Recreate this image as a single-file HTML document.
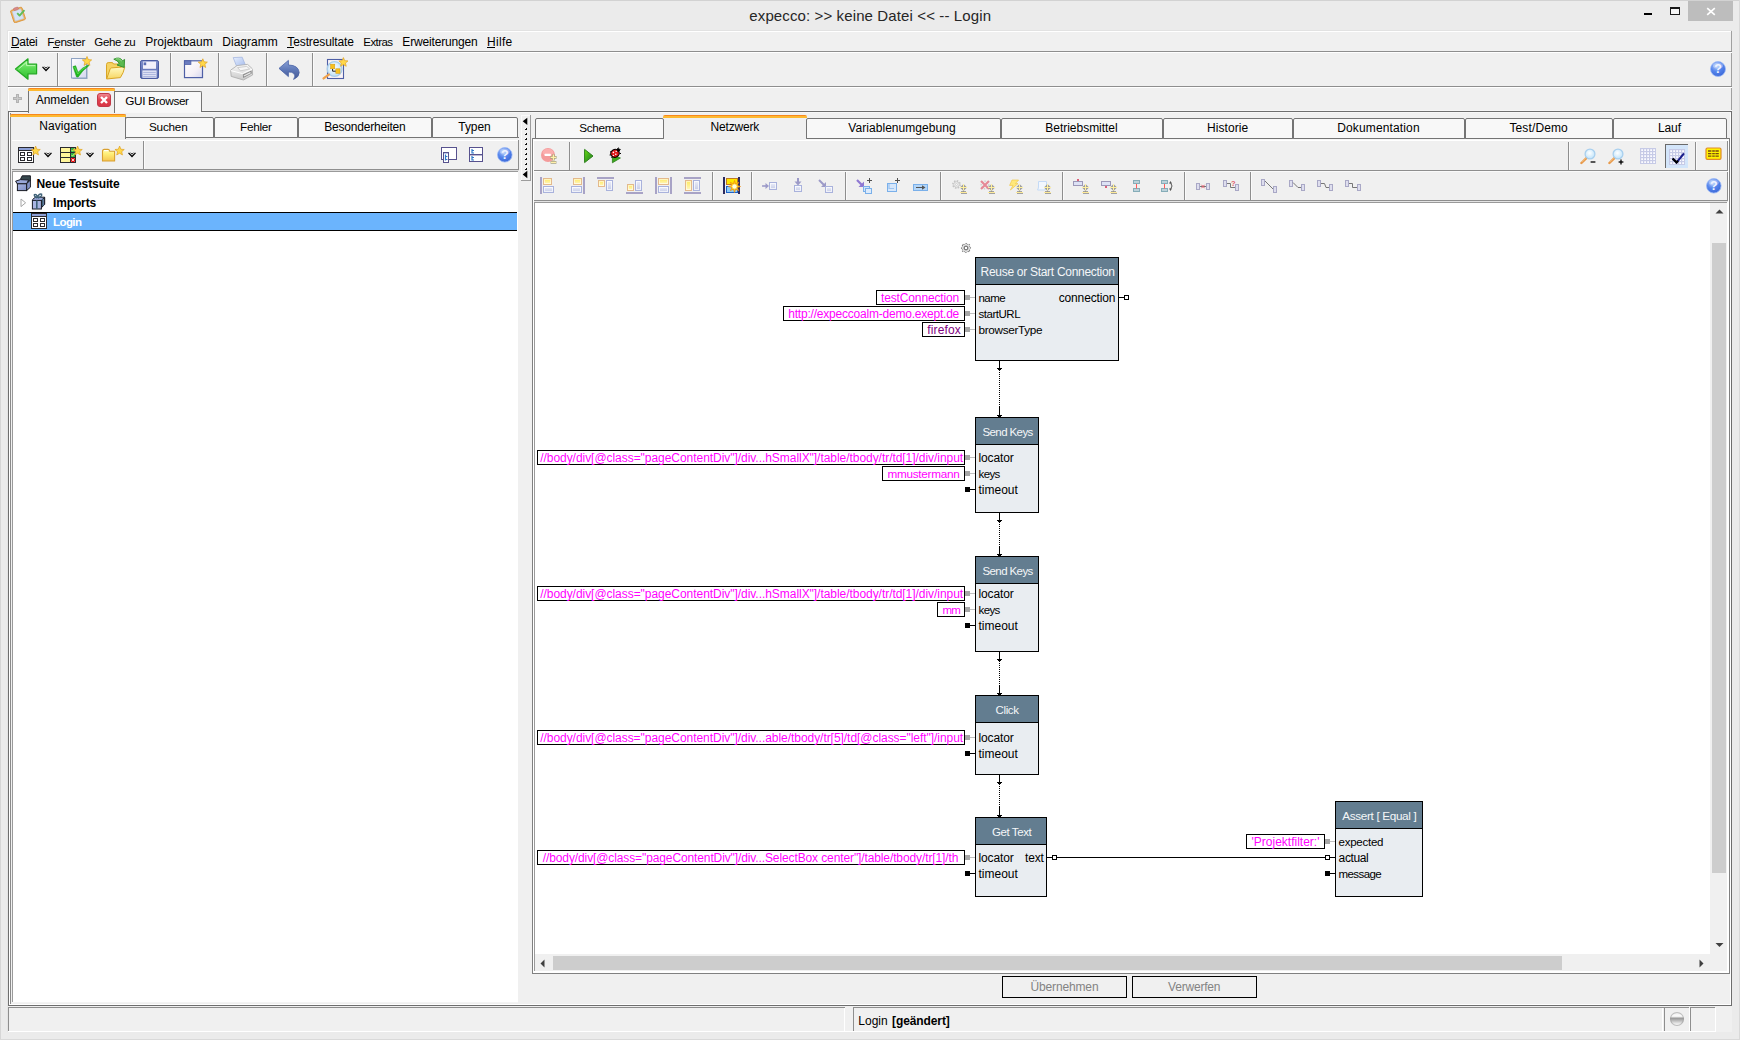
<!DOCTYPE html>
<html lang="de"><head><meta charset="utf-8"><title>expecco: &gt;&gt; keine Datei &lt;&lt; -- Login</title>
<style>
html,body{margin:0;padding:0}
body{width:1740px;height:1040px;overflow:hidden;background:#ebebeb;position:relative;font-family:"Liberation Sans", sans-serif;font-size:12px}
body>div,body>span,body>svg{position:absolute;display:block}
body>span{white-space:pre}
</style></head>
<body>
<div style="left:0px;top:0px;width:1740px;height:1px;background:#d2d2d2;"></div>
<div style="left:0px;top:0px;width:1px;height:1040px;background:#d6d6d6;"></div>
<div style="left:0px;top:1039px;width:1740px;height:1px;background:#d9d9d9;"></div>
<div style="left:1739px;top:0px;width:1px;height:1040px;background:#d9d9d9;"></div>
<div style="left:8px;top:31px;width:1724px;height:1001px;background:#f0f0f0;"></div>
<div style="left:8px;top:31px;width:1724px;height:1px;background:#ffffff;"></div>
<div style="left:8px;top:31px;width:1px;height:80px;background:#ffffff;"></div>
<div style="left:8px;top:30px;width:1724px;height:1px;background:#e2e2e2;"></div>
<div style="left:7px;top:30px;width:1px;height:1002px;background:#e4e4e4;"></div>
<div style="left:1731px;top:31px;width:1px;height:81px;background:#a0a0a0;"></div>
<span style="left:749.3px;top:6px;font-size:15px;line-height:19px;color:#262626;letter-spacing:0.119px;">expecco: &gt;&gt; keine Datei &lt;&lt; -- Login</span>
<div style="left:1644px;top:13px;width:8px;height:2px;background:#000;"></div>
<div style="left:1670px;top:7px;width:10px;height:8px;background:#f6f6f6;border:1px solid #1a1a1a;border-top:2px solid #1a1a1a;box-sizing:border-box;"></div>
<div style="left:1688px;top:1px;width:45px;height:20px;background:#bdbdbd;"></div>
<svg style="left:1706px;top:7px;" width="10" height="9" viewBox="0 0 10 9"><path d="M1.2 1.2 L8.8 7.8 M8.8 1.2 L1.2 7.8" stroke="#fff" stroke-width="1.7" fill="none"/></svg>
<span style="left:11px;top:34px;font-size:12px;line-height:16px;color:#000;letter-spacing:-0.329px;">Datei</span>
<span style="left:47.3px;top:34px;font-size:11.75px;line-height:16px;color:#000;letter-spacing:-0.307px;">Fenster</span>
<span style="left:94.3px;top:34px;font-size:11.5px;line-height:16px;color:#000;letter-spacing:-0.347px;">Gehe zu</span>
<span style="left:145.3px;top:34px;font-size:12px;line-height:16px;color:#000;">Projektbaum</span>
<span style="left:222.3px;top:34px;font-size:12px;line-height:16px;color:#000;">Diagramm</span>
<span style="left:287.3px;top:34px;font-size:12px;line-height:16px;color:#000;letter-spacing:-0.112px;">Testresultate</span>
<span style="left:363.3px;top:34px;font-size:11.5px;line-height:16px;color:#000;letter-spacing:-0.579px;">Extras</span>
<span style="left:402.3px;top:34px;font-size:12px;line-height:16px;color:#000;letter-spacing:-0.166px;">Erweiterungen</span>
<span style="left:487px;top:34px;font-size:12px;line-height:16px;color:#000;letter-spacing:0.321px;">Hilfe</span>
<div style="left:11px;top:47px;width:8px;height:1px;background:#000;"></div>
<div style="left:53px;top:47px;width:6px;height:1px;background:#000;"></div>
<div style="left:287px;top:47px;width:7px;height:1px;background:#000;"></div>
<div style="left:487px;top:47px;width:8px;height:1px;background:#000;"></div>
<div style="left:8px;top:51px;width:1724px;height:1px;background:#8e8e8e;"></div>
<div style="left:8px;top:52px;width:1724px;height:1px;background:#ffffff;"></div>
<div style="left:57px;top:53px;width:1px;height:33px;background:#8e8e8e;"></div>
<div style="left:58px;top:53px;width:1px;height:33px;background:#fafafa;"></div>
<div style="left:170px;top:53px;width:1px;height:33px;background:#8e8e8e;"></div>
<div style="left:171px;top:53px;width:1px;height:33px;background:#fafafa;"></div>
<div style="left:218px;top:53px;width:1px;height:33px;background:#8e8e8e;"></div>
<div style="left:219px;top:53px;width:1px;height:33px;background:#fafafa;"></div>
<div style="left:266px;top:53px;width:1px;height:33px;background:#8e8e8e;"></div>
<div style="left:267px;top:53px;width:1px;height:33px;background:#fafafa;"></div>
<div style="left:312px;top:53px;width:1px;height:33px;background:#8e8e8e;"></div>
<div style="left:313px;top:53px;width:1px;height:33px;background:#fafafa;"></div>
<div style="left:8px;top:86px;width:1724px;height:1px;background:#8e8e8e;"></div>
<div style="left:8px;top:87px;width:1724px;height:1px;background:#ffffff;"></div>
<svg style="left:9px;top:6px;" width="18" height="17" viewBox="0 0 18 17"><g transform="rotate(-18 9 9)"><rect x="3" y="2.5" width="12" height="13" rx="1.2" fill="#f0b35c" stroke="#d8923a" stroke-width=".8"/><rect x="4.6" y="4" width="8.8" height="10" fill="#d5e3f6" stroke="#b9cbe6" stroke-width=".5"/><rect x="6.5" y="1.2" width="5" height="2.6" rx="1" fill="#d98a86" stroke="#b96b68" stroke-width=".4"/></g><path d="M8.2 7.2 L10.6 9.6 L15.4 4.2" stroke="#62bd58" stroke-width="1.9" fill="none" stroke-linejoin="round"/></svg>
<svg style="left:14px;top:57px;" width="24" height="24" viewBox="0 0 24 24"><defs><linearGradient id="ga" x1="0" y1="0" x2="0" y2="1"><stop offset="0" stop-color="#a4f296"/><stop offset=".45" stop-color="#5bdc55"/><stop offset="1" stop-color="#2fbe2e"/></linearGradient></defs><path d="M1.5 12 L14 1.8 L14 7.2 L22.6 7.2 L22.6 16.8 L14 16.8 L14 22.2 Z" fill="url(#ga)" stroke="#22a822" stroke-width="1.2" stroke-linejoin="round"/><path d="M4.5 12 L12.6 5.2 L12.6 8.6 L21.2 8.6" stroke="#c6ffbd" stroke-width="1" fill="none" opacity=".8"/></svg>
<svg style="left:42px;top:66px;" width="8" height="6" viewBox="0 0 8 6"><path d="M0.5 0.9 L4 4.5 L7.5 0.9" stroke="#000" stroke-width="1.25" fill="none"/><path d="M2.5 0.7 L4 2.2 L5.5 0.7" stroke="#000" stroke-width=".9" fill="none"/></svg>
<svg style="left:70px;top:56px;" width="23" height="25" viewBox="0 0 23 25"><defs><linearGradient id="gd" x1="0" y1="0" x2="1" y2="1"><stop offset="0" stop-color="#fdfdff"/><stop offset="1" stop-color="#d6d9ee"/></linearGradient></defs><rect x="2.5" y="3.5" width="15" height="19.5" fill="#6f8cab" opacity=".7"/><rect x="1.5" y="2.5" width="15" height="19.5" fill="url(#gd)" stroke="#8fa3c2" stroke-width="1"/><path d="M3 10.6 L5.6 9.8 L8 16.4 Q12 11.6 18.4 9 L18.8 9.8 Q12.2 14.4 8.2 21 L6.6 21 Z" fill="#1fb41f" stroke="#17a017" stroke-width=".6" stroke-linejoin="round"/><path d="M4.6 11 L7.8 18 Q11 13.6 16 10.8" stroke="#58de50" stroke-width=".9" fill="none"/><polygon points="17.00,0.50 18.30,3.62 21.66,3.89 19.10,6.08 19.88,9.36 17.00,7.61 14.12,9.36 14.90,6.08 12.34,3.89 15.70,3.62" fill="#ffd84a" stroke="#e0a020" stroke-width="0.7" stroke-linejoin="round"/></svg>
<svg style="left:105px;top:56px;" width="23" height="25" viewBox="0 0 23 25"><defs><linearGradient id="gf" x1="0" y1="0" x2="0" y2="1"><stop offset="0" stop-color="#fffbc4"/><stop offset="1" stop-color="#f7d661"/></linearGradient></defs><path d="M1.5 22.5 V8.4 Q1.6 6.8 3.2 6.6 H7 Q8.2 6.8 8.6 8 H14.4 Q15.6 8.2 15.6 9.4 V12 Z" fill="#f5d363" stroke="#d9a526" stroke-width="1" stroke-linejoin="round"/><path d="M1.6 23 L5.2 12.8 Q5.6 12 6.6 11.9 L19.8 10.8 Q18.6 17 15.4 21.6 Z" fill="url(#gf)" stroke="#d9a526" stroke-width="1" stroke-linejoin="round"/><path d="M8.8 3.2 Q14.6 0.2 17.6 4.8 L19.6 3.4 L19.2 11.4 L12 9 L14.4 7.4 Q12.6 4.4 8.8 3.2 Z" fill="#5cba50" stroke="#2f8f2b" stroke-width=".9" stroke-linejoin="round"/><path d="M10.6 3 Q14.4 1.6 16.8 5" stroke="#a6e49c" stroke-width=".8" fill="none"/></svg>
<svg style="left:139px;top:59px;" width="21" height="21" viewBox="0 0 21 21"><defs><linearGradient id="gs" x1="0" y1="0" x2="0" y2="1"><stop offset="0" stop-color="#7f8fcb"/><stop offset="1" stop-color="#5467ae"/></linearGradient></defs><rect x="1.5" y="1.5" width="18" height="18" rx="1.6" fill="url(#gs)" stroke="#4b5ca2" stroke-width="1"/><rect x="4" y="2.6" width="13" height="7.2" fill="#f2f1fb"/><rect x="4.6" y="3.4" width="2.6" height="2.8" fill="#5a6cb2"/><rect x="3.4" y="11.4" width="14.2" height="7.4" fill="#e4e6f6"/><path d="M4.2 13.4 H16.8 M4.2 15.4 H16.8 M4.2 17.4 H16.8" stroke="#a9b2dd" stroke-width="1"/></svg>
<svg style="left:183px;top:58px;" width="26" height="22" viewBox="0 0 26 22"><defs><linearGradient id="gw" x1="0" y1="0" x2="1" y2="1"><stop offset="0" stop-color="#ffffff"/><stop offset=".6" stop-color="#f5f0f6"/><stop offset="1" stop-color="#d5d6ee"/></linearGradient></defs><rect x="1.5" y="2.8" width="18" height="16.8" fill="url(#gw)" stroke="#4e5fa6" stroke-width="1.2"/><rect x="1.5" y="2.8" width="6.4" height="3.6" fill="#6b7cc0" stroke="#4e5fa6" stroke-width=".8"/><polygon points="19.80,0.80 21.07,3.85 24.37,4.12 21.85,6.27 22.62,9.48 19.80,7.76 16.98,9.48 17.75,6.27 15.23,4.12 18.53,3.85" fill="#ffd84a" stroke="#e0a020" stroke-width="0.7" stroke-linejoin="round"/></svg>
<svg style="left:229px;top:56px;" width="25" height="26" viewBox="0 0 25 26"><defs><linearGradient id="gp" x1="0" y1="0" x2="0" y2="1"><stop offset="0" stop-color="#fafafa"/><stop offset="1" stop-color="#c9c9c9"/></linearGradient><linearGradient id="gpp" x1="0" y1="0" x2="1" y2="1"><stop offset="0" stop-color="#e8f0ff"/><stop offset="1" stop-color="#9fb7ea"/></linearGradient></defs><path d="M4.2 1.6 L13.2 1.2 L17 10.4 L8 11.4 Z" fill="url(#gpp)" stroke="#9db0dc" stroke-width=".7"/><path d="M1.6 14.2 L8 9.6 L18.6 8.4 L23.4 12.8 L23.6 19 L14.4 24 L2.2 20.4 Z" fill="url(#gp)" stroke="#a9a9a9" stroke-width=".8" stroke-linejoin="round"/><path d="M8.6 11.6 L17.8 10.4 L20.6 13 L11.4 14.8 Z" fill="#f6f6f6" stroke="#b5b5b5" stroke-width=".6"/><path d="M1.8 14.6 L13.6 17.6 L23.4 13" stroke="#fff" stroke-width="1" fill="none"/><path d="M13.8 18.4 L22.6 14.4 L22.8 17.6 L14.2 22 Z" fill="#8c8c8c"/><path d="M14.8 20 L21.6 16.6" stroke="#e8e8e8" stroke-width="1.2"/></svg>
<svg style="left:278px;top:59px;" width="23" height="22" viewBox="0 0 23 22"><defs><linearGradient id="gu" x1="0" y1="0" x2="0" y2="1"><stop offset="0" stop-color="#8aa2d8"/><stop offset=".55" stop-color="#5a74b4"/><stop offset="1" stop-color="#46598f"/></linearGradient></defs><path d="M1 9.4 L10.4 1.4 L10.4 6 Q20.6 6.2 21.2 13.6 Q21.2 18 15.6 20.4 Q18.2 16.6 15.8 14.4 Q13.8 12.8 10.4 13 L10.4 17.6 Z" fill="url(#gu)" stroke="#4560a6" stroke-width=".8" stroke-linejoin="round"/></svg>
<svg style="left:322px;top:57px;" width="28" height="24" viewBox="0 0 28 24"><defs><radialGradient id="gm" cx="45%" cy="40%" r="60%"><stop offset="0" stop-color="#ffffff"/><stop offset="1" stop-color="#bfe0f6"/></radialGradient></defs><rect x="5.5" y="2.5" width="16" height="19" fill="#fbf4f6" stroke="#4e5fa6" stroke-width="1.1"/><circle cx="12.6" cy="12" r="7.4" fill="url(#gm)" stroke="#a9cdea" stroke-width="1.3"/><path d="M6.8 17.6 L1.6 21.4" stroke="#f0a24c" stroke-width="2.4" stroke-linecap="round"/><rect x="8.6" y="7.2" width="4.2" height="4.6" fill="#f7c11e" stroke="#d39a10" stroke-width=".5"/><rect x="13.8" y="11.8" width="4.2" height="4.6" fill="#f7c11e" stroke="#d39a10" stroke-width=".5"/><path d="M10.6 12 V14.2 H13.6" stroke="#222" stroke-width="1" fill="none"/><polygon points="21.40,0.60 22.67,3.65 25.97,3.92 23.45,6.07 24.22,9.28 21.40,7.56 18.58,9.28 19.35,6.07 16.83,3.92 20.13,3.65" fill="#ffd84a" stroke="#e0a020" stroke-width="0.7" stroke-linejoin="round"/></svg>
<svg style="left:1710.0px;top:61.0px;" width="16.0" height="16.0" viewBox="0 0 16.0 16.0"><defs><radialGradient id="h1" cx="40%" cy="30%" r="75%"><stop offset="0" stop-color="#b4ccfb"/><stop offset=".5" stop-color="#5585ec"/><stop offset="1" stop-color="#3a66d6"/></radialGradient></defs><circle cx="8.0" cy="8.0" r="7.5" fill="url(#h1)" stroke="#9bb9f6" stroke-width=".8"/><ellipse cx="8.0" cy="4.625" rx="5.25" ry="3.15" fill="#fff" opacity=".28"/><text x="8.0" y="12.4" text-anchor="middle" font-family="Liberation Sans, sans-serif" font-weight="700" font-size="12.5" fill="#eef3ff">?</text></svg>
<div style="left:8px;top:111px;width:1724px;height:1px;background:#6e6e6e;"></div>
<div style="left:8px;top:112px;width:1724px;height:1px;background:#f7f7f7;"></div>
<div style="left:8px;top:110px;width:1724px;height:1px;background:#f5f5f5;"></div>
<div style="left:13px;top:97px;width:9px;height:3px;background:#b2b2b2;"></div>
<div style="left:16px;top:94px;width:3px;height:9px;background:#b2b2b2;"></div>
<div style="left:14px;top:98px;width:7px;height:1px;background:#c9c9c9;"></div>
<div style="left:17px;top:95px;width:1px;height:7px;background:#c9c9c9;"></div>
<div style="left:28px;top:88px;width:87px;height:25px;background:#f0f0f0;border-left:1px solid #747474;border-right:1px solid #747474;box-sizing:border-box;border-radius:2px 2px 0 0;"></div>
<div style="left:28px;top:88px;width:87px;height:3px;background:linear-gradient(#f8881e 0 1px,#fdb931 1px 3px);border-radius:2px 2px 0 0;"></div>
<span style="left:35.7px;top:92px;font-size:12px;line-height:16px;color:#000;letter-spacing:-0.064px;">Anmelden</span>
<svg style="left:97px;top:93px;" width="14" height="14" viewBox="0 0 14 14"><defs><linearGradient id="gcl" x1="0" y1="0" x2="0" y2="1"><stop offset="0" stop-color="#ef8d95"/><stop offset=".5" stop-color="#e0414e"/><stop offset="1" stop-color="#d83545"/></linearGradient></defs><rect x="0.5" y="0.5" width="13" height="13" rx="2.5" fill="url(#gcl)" stroke="#c23a48"/><path d="M4 4 L10 10 M10 4 L4 10" stroke="#fff" stroke-width="2.4"/></svg>
<div style="left:115px;top:91px;width:87px;height:21px;background:#f8f8f8;border:1px solid #747474;border-left:none;border-bottom:none;box-sizing:border-box;border-radius:0 2px 0 0;"></div>
<span style="left:125.3px;top:93px;font-size:11.75px;line-height:16px;color:#000;letter-spacing:-0.355px;">GUI Browser</span>
<div style="left:8px;top:112px;width:1px;height:894px;background:#6e6e6e;"></div>
<div style="left:9px;top:113px;width:1px;height:892px;background:#ffffff;"></div>
<div style="left:10px;top:113px;width:1px;height:892px;background:#8a8a8a;"></div>
<div style="left:11px;top:137px;width:508px;height:1px;background:#747474;"></div>
<div style="left:125px;top:117px;width:89px;height:21px;background:#f8f8f8;border:1px solid #747474;box-sizing:border-box;border-radius:2px 2px 0 0;"></div>
<span style="left:149px;top:119px;font-size:11.75px;line-height:16px;color:#000;letter-spacing:-0.232px;">Suchen</span>
<div style="left:214px;top:117px;width:84px;height:21px;background:#f8f8f8;border:1px solid #747474;box-sizing:border-box;border-radius:2px 2px 0 0;"></div>
<span style="left:240px;top:119px;font-size:11.75px;line-height:16px;color:#000;letter-spacing:-0.263px;">Fehler</span>
<div style="left:298px;top:117px;width:134px;height:21px;background:#f8f8f8;border:1px solid #747474;box-sizing:border-box;border-radius:2px 2px 0 0;"></div>
<span style="left:324.3px;top:119px;font-size:12px;line-height:16px;color:#000;letter-spacing:-0.206px;">Besonderheiten</span>
<div style="left:432px;top:117px;width:86px;height:21px;background:#f8f8f8;border:1px solid #747474;box-sizing:border-box;border-radius:2px 2px 0 0;"></div>
<span style="left:458.3px;top:119px;font-size:12px;line-height:16px;color:#000;letter-spacing:-0.076px;">Typen</span>
<div style="left:12px;top:140px;width:507px;height:1px;background:#ffffff;"></div>
<div style="left:10px;top:114px;width:116px;height:25px;background:#f0f0f0;border-right:1px solid #747474;border-left:1px solid #8a8a8a;box-sizing:border-box;border-radius:2px 2px 0 0;"></div>
<div style="left:10px;top:114px;width:116px;height:3px;background:linear-gradient(#f8881e 0 1px,#fdb931 1px 3px);border-radius:2px 2px 0 0;"></div>
<span style="left:39.3px;top:118px;font-size:12px;line-height:16px;color:#000;letter-spacing:0.077px;">Navigation</span>
<div style="left:143px;top:141px;width:1px;height:28px;background:#8e8e8e;"></div>
<div style="left:144px;top:141px;width:1px;height:28px;background:#fafafa;"></div>
<div style="left:12px;top:169px;width:507px;height:1px;background:#8e8e8e;"></div>
<div style="left:12px;top:170px;width:507px;height:1px;background:#dcdcdc;"></div>
<div style="left:518px;top:140px;width:1px;height:30px;background:#8e8e8e;"></div>
<div style="left:12px;top:171px;width:1px;height:832px;background:#9a9a9a;"></div>
<div style="left:13px;top:172px;width:505px;height:830px;background:#ffffff;"></div>
<div style="left:12px;top:171px;width:506px;height:1px;background:#9a9a9a;"></div>
<div style="left:8px;top:1005px;width:1724px;height:1px;background:#6e6e6e;"></div>
<div style="left:9px;top:1004px;width:1722px;height:1px;background:#ffffff;"></div>
<div style="left:12px;top:1002px;width:506px;height:1px;background:#f4f4f4;"></div>
<div style="left:13px;top:212px;width:504px;height:19px;background:#6bb4fd;border-top:1px solid #000;border-bottom:1px solid #000;box-sizing:border-box;"></div>
<span style="left:36.5px;top:176px;font-size:12px;line-height:16px;color:#000;letter-spacing:-0.098px;font-weight:700;">Neue Testsuite</span>
<span style="left:53px;top:195px;font-size:12px;line-height:16px;color:#000;letter-spacing:-0.136px;font-weight:700;">Imports</span>
<span style="left:53px;top:214px;font-size:11.5px;line-height:16px;color:#fff;letter-spacing:-0.574px;font-weight:700;">Login</span>
<div style="left:521px;top:115px;width:1px;height:66px;background:#fbfbfb;"></div>
<div style="left:521px;top:115px;width:10px;height:1px;background:#fbfbfb;"></div>
<div style="left:521px;top:180px;width:10px;height:1px;background:#9c9c9c;"></div>
<div style="left:530px;top:115px;width:1px;height:66px;background:#9c9c9c;"></div>
<svg style="left:521px;top:115px;" width="10" height="66" viewBox="0 0 10 66"><path d="M6.3 2.7 L1.7 6.3 L6.3 9.9 Z M6.3 55.7 L1.7 59.5 L6.3 63.3 Z" fill="#000"/><rect x="4" y="13" width="2" height="2" fill="#111"/><rect x="4" y="13" width="1" height="1" fill="#fff"/><rect x="4" y="18" width="2" height="2" fill="#111"/><rect x="4" y="18" width="1" height="1" fill="#fff"/><rect x="4" y="23" width="2" height="2" fill="#111"/><rect x="4" y="23" width="1" height="1" fill="#fff"/><rect x="4" y="28" width="2" height="2" fill="#111"/><rect x="4" y="28" width="1" height="1" fill="#fff"/><rect x="4" y="33" width="2" height="2" fill="#111"/><rect x="4" y="33" width="1" height="1" fill="#fff"/><rect x="4" y="38" width="2" height="2" fill="#111"/><rect x="4" y="38" width="1" height="1" fill="#fff"/><rect x="4" y="43" width="2" height="2" fill="#111"/><rect x="4" y="43" width="1" height="1" fill="#fff"/><rect x="4" y="48" width="2" height="2" fill="#111"/><rect x="4" y="48" width="1" height="1" fill="#fff"/><rect x="4" y="53" width="2" height="2" fill="#111"/><rect x="4" y="53" width="1" height="1" fill="#fff"/></svg>
<div style="left:532px;top:138px;width:1198px;height:1px;background:#747474;"></div>
<div style="left:535px;top:118px;width:129px;height:21px;background:#f8f8f8;border:1px solid #747474;box-sizing:border-box;border-radius:2px 2px 0 0;"></div>
<span style="left:579.3px;top:120px;font-size:11.75px;line-height:16px;color:#000;letter-spacing:-0.342px;">Schema</span>
<div style="left:806px;top:118px;width:195px;height:21px;background:#f8f8f8;border:1px solid #747474;box-sizing:border-box;border-radius:2px 2px 0 0;"></div>
<span style="left:848.3px;top:120px;font-size:12px;line-height:16px;color:#000;letter-spacing:0.054px;">Variablenumgebung</span>
<div style="left:1001px;top:118px;width:162px;height:21px;background:#f8f8f8;border:1px solid #747474;box-sizing:border-box;border-radius:2px 2px 0 0;"></div>
<span style="left:1045.3px;top:120px;font-size:12px;line-height:16px;color:#000;letter-spacing:-0.023px;">Betriebsmittel</span>
<div style="left:1163px;top:118px;width:130px;height:21px;background:#f8f8f8;border:1px solid #747474;box-sizing:border-box;border-radius:2px 2px 0 0;"></div>
<span style="left:1207px;top:120px;font-size:12px;line-height:16px;color:#000;letter-spacing:0.073px;">Historie</span>
<div style="left:1293px;top:118px;width:172px;height:21px;background:#f8f8f8;border:1px solid #747474;box-sizing:border-box;border-radius:2px 2px 0 0;"></div>
<span style="left:1337.2px;top:120px;font-size:12px;line-height:16px;color:#000;letter-spacing:0.140px;">Dokumentation</span>
<div style="left:1465px;top:118px;width:148px;height:21px;background:#f8f8f8;border:1px solid #747474;box-sizing:border-box;border-radius:2px 2px 0 0;"></div>
<span style="left:1509.4px;top:120px;font-size:12px;line-height:16px;color:#000;letter-spacing:0.130px;">Test/Demo</span>
<div style="left:1613px;top:118px;width:114px;height:21px;background:#f8f8f8;border:1px solid #747474;box-sizing:border-box;border-radius:2px 2px 0 0;"></div>
<span style="left:1658px;top:120px;font-size:12px;line-height:16px;color:#000;letter-spacing:-0.120px;">Lauf</span>
<div style="left:534px;top:139px;width:1194px;height:1px;background:#f6f6f6;"></div>
<div style="left:534px;top:140px;width:1194px;height:1px;background:#ffffff;"></div>
<div style="left:1727px;top:141px;width:1px;height:61px;background:#8e8e8e;"></div>
<div style="left:532px;top:138px;width:1px;height:836px;background:#808080;"></div>
<div style="left:533px;top:139px;width:1px;height:834px;background:#ffffff;"></div>
<div style="left:1729px;top:138px;width:1px;height:836px;background:#808080;"></div>
<div style="left:1728px;top:139px;width:1px;height:834px;background:#ffffff;"></div>
<div style="left:532px;top:973px;width:1198px;height:1px;background:#808080;"></div>
<div style="left:664px;top:115px;width:142px;height:25px;background:#f0f0f0;"></div>
<div style="left:663px;top:115px;width:144px;height:3px;background:linear-gradient(#f8881e 0 1px,#fdb931 1px 3px);border-radius:2px 2px 0 0;"></div>
<span style="left:710.5px;top:119px;font-size:12px;line-height:16px;color:#000;letter-spacing:-0.174px;">Netzwerk</span>
<div style="left:534px;top:170px;width:1194px;height:1px;background:#8e8e8e;"></div>
<div style="left:534px;top:171px;width:1194px;height:1px;background:#fafafa;"></div>
<div style="left:569px;top:142px;width:1px;height:28px;background:#8e8e8e;"></div>
<div style="left:570px;top:142px;width:1px;height:28px;background:#fafafa;"></div>
<div style="left:1568px;top:142px;width:1px;height:28px;background:#8e8e8e;"></div>
<div style="left:1569px;top:142px;width:1px;height:28px;background:#fafafa;"></div>
<div style="left:1695px;top:142px;width:1px;height:28px;background:#8e8e8e;"></div>
<div style="left:1696px;top:142px;width:1px;height:28px;background:#fafafa;"></div>
<div style="left:534px;top:200px;width:1194px;height:1px;background:#8e8e8e;"></div>
<div style="left:534px;top:201px;width:1194px;height:1px;background:#e4e4e4;"></div>
<div style="left:712px;top:172px;width:1px;height:28px;background:#8e8e8e;"></div>
<div style="left:713px;top:172px;width:1px;height:28px;background:#fafafa;"></div>
<div style="left:751px;top:172px;width:1px;height:28px;background:#8e8e8e;"></div>
<div style="left:752px;top:172px;width:1px;height:28px;background:#fafafa;"></div>
<div style="left:845px;top:172px;width:1px;height:28px;background:#8e8e8e;"></div>
<div style="left:846px;top:172px;width:1px;height:28px;background:#fafafa;"></div>
<div style="left:940px;top:172px;width:1px;height:28px;background:#8e8e8e;"></div>
<div style="left:941px;top:172px;width:1px;height:28px;background:#fafafa;"></div>
<div style="left:1062px;top:172px;width:1px;height:28px;background:#8e8e8e;"></div>
<div style="left:1063px;top:172px;width:1px;height:28px;background:#fafafa;"></div>
<div style="left:1184px;top:172px;width:1px;height:28px;background:#8e8e8e;"></div>
<div style="left:1185px;top:172px;width:1px;height:28px;background:#fafafa;"></div>
<div style="left:1250px;top:172px;width:1px;height:28px;background:#8e8e8e;"></div>
<div style="left:1251px;top:172px;width:1px;height:28px;background:#fafafa;"></div>
<div style="left:534px;top:202px;width:1px;height:769px;background:#9a9a9a;"></div>
<div style="left:534px;top:202px;width:1193px;height:1px;background:#9a9a9a;"></div>
<div style="left:1727px;top:202px;width:1px;height:771px;background:#ffffff;"></div>
<div style="left:535px;top:203px;width:1175px;height:751px;background:#ffffff;"></div>
<div style="left:1710px;top:203px;width:17px;height:751px;background:#f0f0f0;"></div>
<div style="left:1712px;top:243px;width:14px;height:630px;background:#cdcdcd;"></div>
<svg style="left:1715px;top:208px;" width="9" height="6" viewBox="0 0 9 6"><path d="M0.5 5.5 L4.5 1.5 L8.5 5.5 Z" fill="#404040"/></svg>
<svg style="left:1715px;top:943px;" width="9" height="6" viewBox="0 0 9 6"><path d="M0.5 0 L4.5 4 L8.5 0 Z" fill="#404040"/></svg>
<div style="left:535px;top:954px;width:1192px;height:17px;background:#f0f0f0;"></div>
<div style="left:534px;top:971px;width:1195px;height:1px;background:#ffffff;"></div>
<div style="left:533px;top:972px;width:1196px;height:1px;background:#ffffff;"></div>
<div style="left:553px;top:956px;width:1009px;height:14px;background:#cdcdcd;"></div>
<svg style="left:539.3px;top:958.8px;" width="6" height="9" viewBox="0 0 6 9"><path d="M5.5 0.5 L1.5 4.5 L5.5 8.5 Z" fill="#404040"/></svg>
<svg style="left:1698.9px;top:958.8px;" width="6" height="9" viewBox="0 0 6 9"><path d="M0.5 0.5 L4.5 4.5 L0.5 8.5 Z" fill="#404040"/></svg>
<svg style="left:960px;top:242px;" width="12" height="12" viewBox="0 0 12 12"><polygon points="6.00,1.00 7.49,2.40 9.54,2.46 9.60,4.51 11.00,6.00 9.60,7.49 9.54,9.54 7.49,9.60 6.00,11.00 4.51,9.60 2.46,9.54 2.40,7.49 1.00,6.00 2.40,4.51 2.46,2.46 4.51,2.40" fill="#dedede" stroke="#6a6a6a" stroke-width=".9" stroke-dasharray="1.1 .7" stroke-linejoin="round"/><circle cx="6" cy="6" r="1.9" fill="#fff" stroke="#5a5a5a" stroke-width="1"/></svg>
<div style="left:975px;top:257px;width:144px;height:104px;background:#e9edf1;border:1px solid #000;box-sizing:border-box;"></div>
<div style="left:976px;top:258px;width:142px;height:26px;background:#637d90;"></div>
<div style="left:975px;top:284px;width:144px;height:1px;background:#000;"></div>
<span style="left:980.6px;top:264px;font-size:12px;line-height:16px;color:#f4f6f8;letter-spacing:-0.293px;">Reuse or Start Connection</span>
<div style="left:965px;top:295px;width:5px;height:5px;background:#a6a6a6;"></div>
<div style="left:970px;top:297px;width:5px;height:1px;background:#c0c0c0;"></div>
<span style="left:978.5px;top:290px;font-size:11.5px;line-height:16px;color:#000;letter-spacing:-0.560px;">name</span>
<div style="left:965px;top:311px;width:5px;height:5px;background:#a6a6a6;"></div>
<div style="left:970px;top:313px;width:5px;height:1px;background:#c0c0c0;"></div>
<span style="left:978.5px;top:306px;font-size:11.5px;line-height:16px;color:#000;letter-spacing:-0.468px;">startURL</span>
<div style="left:965px;top:327px;width:5px;height:5px;background:#a6a6a6;"></div>
<div style="left:970px;top:329px;width:5px;height:1px;background:#c0c0c0;"></div>
<span style="left:978.5px;top:322px;font-size:11.75px;line-height:16px;color:#000;letter-spacing:-0.327px;">browserType</span>
<span style="left:1058.75px;top:290px;font-size:12px;line-height:16px;color:#000;letter-spacing:-0.161px;">connection</span>
<div style="left:1119px;top:297px;width:5px;height:1px;background:#000;"></div>
<div style="left:1124px;top:295px;width:5px;height:5px;background:#fff;border:1px solid #000;box-sizing:border-box;"></div>
<div style="left:876px;top:290px;width:89px;height:15px;background:#fff;border:1px solid #000;box-sizing:border-box;"></div>
<span style="left:881px;top:290px;font-size:12px;line-height:16px;color:#ff00ff;letter-spacing:-0.136px;">testConnection</span>
<div style="left:783px;top:306px;width:182px;height:15px;background:#fff;border:1px solid #000;box-sizing:border-box;"></div>
<span style="left:788.3px;top:306px;font-size:12px;line-height:16px;color:#ff00ff;letter-spacing:-0.215px;">http://expeccoalm-demo.exept.de</span>
<div style="left:922px;top:322px;width:43px;height:15px;background:#fff;border:1px solid #000;box-sizing:border-box;"></div>
<span style="left:927.3px;top:322px;font-size:12px;line-height:16px;color:#800080;letter-spacing:0.119px;">firefox</span>
<div style="left:999px;top:361px;width:1px;height:8px;background:#000;"></div>
<div style="left:997px;top:368px;width:5px;height:1px;background:#000;"></div>
<div style="left:998px;top:369px;width:3px;height:1px;background:#000;"></div>
<div style="left:999px;top:370px;width:1px;height:1px;background:#000;"></div>
<div style="left:999px;top:372px;width:1px;height:36px;background:repeating-linear-gradient(#000 0 1px,#fff 1px 2px);"></div>
<div style="left:999px;top:407px;width:1px;height:9px;background:#000;"></div>
<div style="left:997px;top:415px;width:5px;height:1px;background:#000;"></div>
<div style="left:998px;top:416px;width:3px;height:1px;background:#000;"></div>
<div style="left:975px;top:417px;width:64px;height:96px;background:#e9edf1;border:1px solid #000;box-sizing:border-box;"></div>
<div style="left:976px;top:418px;width:62px;height:26px;background:#637d90;"></div>
<div style="left:975px;top:444px;width:64px;height:1px;background:#000;"></div>
<span style="left:982.5px;top:424px;font-size:11.5px;line-height:16px;color:#f4f6f8;letter-spacing:-0.600px;">Send Keys</span>
<div style="left:965px;top:455px;width:5px;height:5px;background:#a6a6a6;"></div>
<div style="left:970px;top:457px;width:5px;height:1px;background:#c0c0c0;"></div>
<span style="left:978.5px;top:450px;font-size:12px;line-height:16px;color:#000;letter-spacing:-0.130px;">locator</span>
<div style="left:965px;top:471px;width:5px;height:5px;background:#a6a6a6;"></div>
<div style="left:970px;top:473px;width:5px;height:1px;background:#c0c0c0;"></div>
<span style="left:978.5px;top:466px;font-size:11.5px;line-height:16px;color:#000;letter-spacing:-0.600px;">keys</span>
<div style="left:965px;top:487px;width:5px;height:5px;background:#000;"></div>
<div style="left:970px;top:489px;width:5px;height:1px;background:#000;"></div>
<span style="left:978.5px;top:482px;font-size:12px;line-height:16px;color:#000;">timeout</span>
<div style="left:537px;top:450px;width:428px;height:15px;background:#fff;border:1px solid #000;box-sizing:border-box;"></div>
<span style="left:540.2px;top:450px;font-size:12px;line-height:16px;color:#ff00ff;letter-spacing:-0.045px;">//body/div[@class=&quot;pageContentDiv&quot;]/div...hSmallX&quot;]/table/tbody/tr/td[1]/div/input</span>
<div style="left:882px;top:466px;width:83px;height:15px;background:#fff;border:1px solid #000;box-sizing:border-box;"></div>
<span style="left:887.5px;top:466px;font-size:11.75px;line-height:16px;color:#ff00ff;letter-spacing:-0.284px;">mmustermann</span>
<div style="left:999px;top:513px;width:1px;height:8px;background:#000;"></div>
<div style="left:997px;top:520px;width:5px;height:1px;background:#000;"></div>
<div style="left:998px;top:521px;width:3px;height:1px;background:#000;"></div>
<div style="left:999px;top:522px;width:1px;height:1px;background:#000;"></div>
<div style="left:999px;top:524px;width:1px;height:23px;background:repeating-linear-gradient(#000 0 1px,#fff 1px 2px);"></div>
<div style="left:999px;top:546px;width:1px;height:9px;background:#000;"></div>
<div style="left:997px;top:554px;width:5px;height:1px;background:#000;"></div>
<div style="left:998px;top:555px;width:3px;height:1px;background:#000;"></div>
<div style="left:975px;top:556px;width:64px;height:96px;background:#e9edf1;border:1px solid #000;box-sizing:border-box;"></div>
<div style="left:976px;top:557px;width:62px;height:26px;background:#637d90;"></div>
<div style="left:975px;top:583px;width:64px;height:1px;background:#000;"></div>
<span style="left:982.5px;top:563px;font-size:11.5px;line-height:16px;color:#f4f6f8;letter-spacing:-0.600px;">Send Keys</span>
<div style="left:965px;top:591px;width:5px;height:5px;background:#a6a6a6;"></div>
<div style="left:970px;top:593px;width:5px;height:1px;background:#c0c0c0;"></div>
<span style="left:978.5px;top:586px;font-size:12px;line-height:16px;color:#000;letter-spacing:-0.130px;">locator</span>
<div style="left:965px;top:607px;width:5px;height:5px;background:#a6a6a6;"></div>
<div style="left:970px;top:609px;width:5px;height:1px;background:#c0c0c0;"></div>
<span style="left:978.5px;top:602px;font-size:11.5px;line-height:16px;color:#000;letter-spacing:-0.600px;">keys</span>
<div style="left:965px;top:623px;width:5px;height:5px;background:#000;"></div>
<div style="left:970px;top:625px;width:5px;height:1px;background:#000;"></div>
<span style="left:978.5px;top:618px;font-size:12px;line-height:16px;color:#000;">timeout</span>
<div style="left:537px;top:586px;width:428px;height:15px;background:#fff;border:1px solid #000;box-sizing:border-box;"></div>
<span style="left:540.2px;top:586px;font-size:12px;line-height:16px;color:#ff00ff;letter-spacing:-0.045px;">//body/div[@class=&quot;pageContentDiv&quot;]/div...hSmallX&quot;]/table/tbody/tr/td[1]/div/input</span>
<div style="left:937px;top:602px;width:28px;height:15px;background:#fff;border:1px solid #000;box-sizing:border-box;"></div>
<span style="left:942.4px;top:602px;font-size:11.5px;line-height:16px;color:#ff00ff;letter-spacing:-0.600px;">mm</span>
<div style="left:999px;top:652px;width:1px;height:8px;background:#000;"></div>
<div style="left:997px;top:659px;width:5px;height:1px;background:#000;"></div>
<div style="left:998px;top:660px;width:3px;height:1px;background:#000;"></div>
<div style="left:999px;top:661px;width:1px;height:1px;background:#000;"></div>
<div style="left:999px;top:663px;width:1px;height:23px;background:repeating-linear-gradient(#000 0 1px,#fff 1px 2px);"></div>
<div style="left:999px;top:685px;width:1px;height:9px;background:#000;"></div>
<div style="left:997px;top:693px;width:5px;height:1px;background:#000;"></div>
<div style="left:998px;top:694px;width:3px;height:1px;background:#000;"></div>
<div style="left:975px;top:695px;width:64px;height:80px;background:#e9edf1;border:1px solid #000;box-sizing:border-box;"></div>
<div style="left:976px;top:696px;width:62px;height:26px;background:#637d90;"></div>
<div style="left:975px;top:722px;width:64px;height:1px;background:#000;"></div>
<span style="left:995.5px;top:702px;font-size:11.5px;line-height:16px;color:#f4f6f8;letter-spacing:-0.355px;">Click</span>
<div style="left:965px;top:735px;width:5px;height:5px;background:#a6a6a6;"></div>
<div style="left:970px;top:737px;width:5px;height:1px;background:#c0c0c0;"></div>
<span style="left:978.5px;top:730px;font-size:12px;line-height:16px;color:#000;letter-spacing:-0.130px;">locator</span>
<div style="left:965px;top:751px;width:5px;height:5px;background:#000;"></div>
<div style="left:970px;top:753px;width:5px;height:1px;background:#000;"></div>
<span style="left:978.5px;top:746px;font-size:12px;line-height:16px;color:#000;">timeout</span>
<div style="left:537px;top:730px;width:428px;height:15px;background:#fff;border:1px solid #000;box-sizing:border-box;"></div>
<span style="left:540.2px;top:730px;font-size:12px;line-height:16px;color:#ff00ff;letter-spacing:-0.046px;">//body/div[@class=&quot;pageContentDiv&quot;]/div...able/tbody/tr[5]/td[@class=&quot;left&quot;]/input</span>
<div style="left:999px;top:775px;width:1px;height:8px;background:#000;"></div>
<div style="left:997px;top:782px;width:5px;height:1px;background:#000;"></div>
<div style="left:998px;top:783px;width:3px;height:1px;background:#000;"></div>
<div style="left:999px;top:784px;width:1px;height:1px;background:#000;"></div>
<div style="left:999px;top:786px;width:1px;height:22px;background:repeating-linear-gradient(#000 0 1px,#fff 1px 2px);"></div>
<div style="left:999px;top:807px;width:1px;height:9px;background:#000;"></div>
<div style="left:997px;top:815px;width:5px;height:1px;background:#000;"></div>
<div style="left:998px;top:816px;width:3px;height:1px;background:#000;"></div>
<div style="left:975px;top:817px;width:72px;height:80px;background:#e9edf1;border:1px solid #000;box-sizing:border-box;"></div>
<div style="left:976px;top:818px;width:70px;height:26px;background:#637d90;"></div>
<div style="left:975px;top:844px;width:72px;height:1px;background:#000;"></div>
<span style="left:991.9px;top:824px;font-size:11.5px;line-height:16px;color:#f4f6f8;letter-spacing:-0.389px;">Get Text</span>
<div style="left:965px;top:855px;width:5px;height:5px;background:#a6a6a6;"></div>
<div style="left:970px;top:857px;width:5px;height:1px;background:#c0c0c0;"></div>
<span style="left:978.5px;top:850px;font-size:12px;line-height:16px;color:#000;letter-spacing:-0.130px;">locator</span>
<div style="left:965px;top:871px;width:5px;height:5px;background:#000;"></div>
<div style="left:970px;top:873px;width:5px;height:1px;background:#000;"></div>
<span style="left:978.5px;top:866px;font-size:12px;line-height:16px;color:#000;">timeout</span>
<span style="left:1025px;top:850px;font-size:12px;line-height:16px;color:#000;letter-spacing:-0.181px;">text</span>
<div style="left:537px;top:850px;width:428px;height:15px;background:#fff;border:1px solid #000;box-sizing:border-box;"></div>
<span style="left:542.8px;top:850px;font-size:12px;line-height:16px;color:#ff00ff;letter-spacing:-0.113px;">//body/div[@class=&quot;pageContentDiv&quot;]/div...SelectBox center&quot;]/table/tbody/tr[1]/th</span>
<div style="left:1047px;top:857px;width:5px;height:1px;background:#000;"></div>
<div style="left:1052px;top:855px;width:5px;height:5px;background:#fff;border:1px solid #000;box-sizing:border-box;"></div>
<div style="left:1057px;top:857px;width:268px;height:1px;background:#000;"></div>
<div style="left:1335px;top:801px;width:88px;height:96px;background:#e9edf1;border:1px solid #000;box-sizing:border-box;"></div>
<div style="left:1336px;top:802px;width:86px;height:26px;background:#637d90;"></div>
<div style="left:1335px;top:828px;width:88px;height:1px;background:#000;"></div>
<span style="left:1342.2px;top:808px;font-size:11.75px;line-height:16px;color:#f4f6f8;letter-spacing:-0.339px;">Assert [ Equal ]</span>
<div style="left:1325px;top:839px;width:5px;height:5px;background:#a6a6a6;"></div>
<div style="left:1330px;top:841px;width:5px;height:1px;background:#c0c0c0;"></div>
<span style="left:1338.6px;top:834px;font-size:11.5px;line-height:16px;color:#000;letter-spacing:-0.255px;">expected</span>
<div style="left:1325px;top:855px;width:5px;height:5px;background:#fff;border:1px solid #000;box-sizing:border-box;"></div>
<div style="left:1330px;top:857px;width:5px;height:1px;background:#000;"></div>
<span style="left:1338.6px;top:850px;font-size:12.0px;line-height:16px;color:#000;letter-spacing:-0.366px;">actual</span>
<div style="left:1325px;top:871px;width:5px;height:5px;background:#000;"></div>
<div style="left:1330px;top:873px;width:5px;height:1px;background:#000;"></div>
<span style="left:1338.6px;top:866px;font-size:11.5px;line-height:16px;color:#000;letter-spacing:-0.600px;">message</span>
<div style="left:1246px;top:834px;width:79px;height:15px;background:#fff;border:1px solid #000;box-sizing:border-box;"></div>
<span style="left:1251.5px;top:834px;font-size:12px;line-height:16px;color:#ff00ff;">&#x27;Projektfilter:&#x27;</span>
<div style="left:1002px;top:976px;width:125px;height:22px;border:1px solid #000;box-sizing:border-box;"></div>
<span style="left:1030.4px;top:979px;font-size:12px;line-height:16px;color:#838383;letter-spacing:-0.131px;">Übernehmen</span>
<div style="left:1132px;top:976px;width:125px;height:22px;border:1px solid #000;box-sizing:border-box;"></div>
<span style="left:1168px;top:979px;font-size:12px;line-height:16px;color:#838383;letter-spacing:-0.191px;">Verwerfen</span>
<div style="left:1731px;top:112px;width:1px;height:894px;background:#6e6e6e;"></div>
<div style="left:1730px;top:113px;width:1px;height:892px;background:#ffffff;"></div>
<div style="left:8px;top:1007px;width:837px;height:1px;background:#8e8e8e;"></div>
<div style="left:8px;top:1007px;width:1px;height:24px;background:#8e8e8e;"></div>
<div style="left:8px;top:1031px;width:1708px;height:1px;background:#ffffff;"></div>
<div style="left:844px;top:1008px;width:1px;height:23px;background:#ffffff;"></div>
<div style="left:853px;top:1007px;width:811px;height:1px;background:#8e8e8e;"></div>
<div style="left:853px;top:1007px;width:1px;height:24px;background:#8e8e8e;"></div>
<div style="left:1662px;top:1008px;width:1px;height:23px;background:#ffffff;"></div>
<div style="left:1664px;top:1007px;width:25px;height:1px;background:#8e8e8e;"></div>
<div style="left:1664px;top:1007px;width:1px;height:24px;background:#8e8e8e;"></div>
<div style="left:1689px;top:1008px;width:1px;height:23px;background:#ffffff;"></div>
<div style="left:1690px;top:1007px;width:25px;height:1px;background:#8e8e8e;"></div>
<div style="left:1690px;top:1007px;width:1px;height:24px;background:#8e8e8e;"></div>
<div style="left:1715px;top:1008px;width:1px;height:23px;background:#ffffff;"></div>
<span style="left:858.3px;top:1013px;font-size:12px;line-height:16px;color:#000;">Login </span>
<span style="left:892px;top:1013px;font-size:12px;line-height:16px;color:#000;letter-spacing:-0.097px;font-weight:700;">[geändert]</span>
<div style="left:1670px;top:1012px;width:14px;height:14px;border-radius:50%;box-sizing:border-box;border:1px solid rgba(150,150,150,.55);background:linear-gradient(#e6e6e6 0,#fcfcfc 18%,#f0f0f0 30%,#9a9a9a 44%,#b4b4b4 60%,#e4e4e4 85%,#f6f6f6 100%);"></div>
<svg style="left:18px;top:147px;" width="16" height="16" viewBox="0 0 16 16"><rect x="0.5" y="0.5" width="15" height="15" fill="#fff" stroke="#2a2a2e" stroke-width="1"/><rect x="1" y="1" width="14" height="2" fill="#8c9fd6"/><path d="M1 3.5 H15" stroke="#2a2a2e" stroke-width="1"/><rect x="2.5" y="5.5" width="4" height="3" fill="#fff" stroke="#2a2a2e" stroke-width="1"/><rect x="9.5" y="5.5" width="4" height="3" fill="#fff" stroke="#2a2a2e" stroke-width="1"/><rect x="2.5" y="10.5" width="4" height="3" fill="#fff" stroke="#2a2a2e" stroke-width="1"/><rect x="9.5" y="10.5" width="4" height="3" fill="#fff" stroke="#2a2a2e" stroke-width="1"/></svg>
<svg style="left:30px;top:145px;" width="12" height="12" viewBox="0 0 12 12"><polygon points="5.60,1.10 6.90,4.22 10.26,4.49 7.70,6.68 8.48,9.96 5.60,8.21 2.72,9.96 3.50,6.68 0.94,4.49 4.30,4.22" fill="#ffd84a" stroke="#e0a020" stroke-width="0.7" stroke-linejoin="round"/></svg>
<svg style="left:43.5px;top:152px;" width="8" height="6" viewBox="0 0 8 6"><path d="M0.5 0.9 L4 4.5 L7.5 0.9" stroke="#000" stroke-width="1.25" fill="none"/><path d="M2.5 0.7 L4 2.2 L5.5 0.7" stroke="#000" stroke-width=".9" fill="none"/></svg>
<svg style="left:60px;top:147px;" width="16" height="16" viewBox="0 0 16 16"><rect x="0.5" y="0.5" width="15" height="15" fill="#fff59a" stroke="#2a2a2e" stroke-width="1"/><path d="M0.5 5.5 H15.5 M0.5 10.5 H15.5 M10.5 0.5 V15.5" stroke="#2a2a2e" stroke-width="1"/><rect x="11" y="1" width="4" height="4" fill="#2fae4a"/><rect x="11" y="6" width="4" height="4" fill="#2fae4a"/><path d="M11.4 2.8 L12.6 4.2 L14.6 1.4 M11.4 7.8 L12.6 9.2 L14.6 6.4" stroke="#e8ff70" stroke-width=".9" fill="none"/><rect x="11" y="11" width="4" height="4" fill="#fff"/><circle cx="13" cy="13" r="1.7" fill="none" stroke="#e81010" stroke-width="1.3"/></svg>
<svg style="left:72px;top:145px;" width="12" height="12" viewBox="0 0 12 12"><polygon points="5.60,1.10 6.90,4.22 10.26,4.49 7.70,6.68 8.48,9.96 5.60,8.21 2.72,9.96 3.50,6.68 0.94,4.49 4.30,4.22" fill="#ffd84a" stroke="#e0a020" stroke-width="0.7" stroke-linejoin="round"/></svg>
<svg style="left:86px;top:152px;" width="8" height="6" viewBox="0 0 8 6"><path d="M0.5 0.9 L4 4.5 L7.5 0.9" stroke="#000" stroke-width="1.25" fill="none"/><path d="M2.5 0.7 L4 2.2 L5.5 0.7" stroke="#000" stroke-width=".9" fill="none"/></svg>
<svg style="left:101px;top:148px;" width="16" height="14" viewBox="0 0 16 14"><defs><linearGradient id="gfl" x1="0" y1="0" x2="0" y2="1"><stop offset="0" stop-color="#fffbc0"/><stop offset=".35" stop-color="#fff07a"/><stop offset="1" stop-color="#f6c650"/></linearGradient></defs><path d="M1.5 13 V3.4 Q1.5 1.4 3.4 1.4 H7 Q8.4 1.4 8.6 3.2 H13.6 V13 Z" fill="url(#gfl)" stroke="#d9a030" stroke-width="1.1" stroke-linejoin="round"/><path d="M3 2.6 H7.4" stroke="#fff" stroke-width="1"/></svg>
<svg style="left:114px;top:145px;" width="12" height="12" viewBox="0 0 12 12"><polygon points="5.60,1.10 6.90,4.22 10.26,4.49 7.70,6.68 8.48,9.96 5.60,8.21 2.72,9.96 3.50,6.68 0.94,4.49 4.30,4.22" fill="#ffd84a" stroke="#e0a020" stroke-width="0.7" stroke-linejoin="round"/></svg>
<svg style="left:127.5px;top:152px;" width="8" height="6" viewBox="0 0 8 6"><path d="M0.5 0.9 L4 4.5 L7.5 0.9" stroke="#000" stroke-width="1.25" fill="none"/><path d="M2.5 0.7 L4 2.2 L5.5 0.7" stroke="#000" stroke-width=".9" fill="none"/></svg>
<svg style="left:440px;top:146px;" width="18" height="18" viewBox="0 0 18 18"><rect x="1.5" y="1.5" width="15" height="12" fill="#fff" stroke="#57528e" stroke-width="1"/><rect x="3.5" y="6.5" width="5" height="10" fill="#fff" stroke="#57528e" stroke-width="1"/><rect x="4" y="7" width="4" height="1" fill="#b9c6ea"/><path d="M5.5 8.4 V14.6 M5.5 10.5 H7.4 M5.5 13.5 H7.4" stroke="#2f79c8" stroke-width="1.2" fill="none"/></svg>
<svg style="left:468px;top:146px;" width="16" height="18" viewBox="0 0 16 18"><rect x="1.5" y="1.5" width="13" height="14" fill="#fff" stroke="#57528e" stroke-width="1"/><path d="M1.5 8.7 H14.5" stroke="#57528e" stroke-width="1.4"/><path d="M4 3 V7.6 M4 4.5 H6 M4 7 H6 M4 10 V14.6 M4 11.5 H6 M4 14 H6" stroke="#2f79c8" stroke-width="1.2" fill="none"/></svg>
<svg style="left:497.2px;top:147.2px;" width="15.6" height="15.6" viewBox="0 0 15.6 15.6"><defs><radialGradient id="h2" cx="40%" cy="30%" r="75%"><stop offset="0" stop-color="#b4ccfb"/><stop offset=".5" stop-color="#5585ec"/><stop offset="1" stop-color="#3a66d6"/></radialGradient></defs><circle cx="7.8" cy="7.8" r="7.3" fill="url(#h2)" stroke="#9bb9f6" stroke-width=".8"/><ellipse cx="7.8" cy="4.515000000000001" rx="5.109999999999999" ry="3.066" fill="#fff" opacity=".28"/><text x="7.8" y="12.2" text-anchor="middle" font-family="Liberation Sans, sans-serif" font-weight="700" font-size="12.5" fill="#eef3ff">?</text></svg>
<svg style="left:15px;top:175px;" width="17" height="17" viewBox="0 0 17 17"><defs><linearGradient id="gbx" x1="0" y1="0" x2="1" y2="1"><stop offset="0" stop-color="#aab6e2"/><stop offset="1" stop-color="#7f8fc8"/></linearGradient></defs><path d="M5.4 4.4 L7.2 0.8 H15.4 V5.2 L11.8 8.8 Z" fill="#36474d" stroke="#1a1c24" stroke-width="1" stroke-linejoin="round"/><path d="M0.6 6.2 L5.4 4.6 L13.6 5 L11.6 8.8 H2.2 Z" fill="#9aa8da" stroke="#1a1c24" stroke-width="1" stroke-linejoin="round"/><path d="M11.6 8.8 L15.4 5 V12.2 L11.6 15.6 Z" fill="#8493c9" stroke="#1a1c24" stroke-width="1" stroke-linejoin="round"/><rect x="2.4" y="8.8" width="9.2" height="6.8" fill="url(#gbx)" stroke="#1a1c24" stroke-width="1"/></svg>
<svg style="left:20px;top:198px;" width="7" height="10" viewBox="0 0 7 10"><path d="M1 1 L5.6 4.8 L1 8.6 Z" fill="#fff" stroke="#a6a6a6" stroke-width="1"/></svg>
<svg style="left:31px;top:193px;" width="17" height="18" viewBox="0 0 17 18"><path d="M1.4 6.6 L4.4 4.2 H13.6 V11.4 L10.4 14.6" fill="#9aa8da" stroke="#1a1c24" stroke-width="1"/><path d="M10.4 7.4 L13.6 4.4 V11.4 L10.4 14.8 Z" fill="#8e9cd0" stroke="#1a1c24" stroke-width="1" stroke-linejoin="round"/><rect x="1.4" y="7.4" width="9" height="8.6" fill="#a9b5e2" stroke="#1a1c24" stroke-width="1"/><path d="M5.8 7.4 V16 M11.8 5.8 V13" stroke="#3f6278" stroke-width="1.6"/><path d="M6.4 5 Q2.8 3.6 3.4 1.6 Q5.6 0.6 6.6 4.6 Q7.6 0.4 10.6 1.2 Q11.4 3.6 7 5" fill="none" stroke="#3f6278" stroke-width="1.4"/></svg>
<svg style="left:31px;top:213px;" width="16" height="16" viewBox="0 0 16 16"><rect x="0.5" y="0.5" width="15" height="15" fill="#fff" stroke="#2a2a2e" stroke-width="1"/><rect x="1" y="1" width="14" height="2" fill="#8c9fd6"/><path d="M1 3.5 H15" stroke="#2a2a2e" stroke-width="1"/><rect x="2.5" y="5.5" width="4" height="3" fill="#fff" stroke="#2a2a2e" stroke-width="1"/><rect x="9.5" y="5.5" width="4" height="3" fill="#fff" stroke="#2a2a2e" stroke-width="1"/><rect x="2.5" y="10.5" width="4" height="3" fill="#fff" stroke="#2a2a2e" stroke-width="1"/><rect x="9.5" y="10.5" width="4" height="3" fill="#fff" stroke="#2a2a2e" stroke-width="1"/></svg>
<svg style="left:540px;top:147px;" width="19" height="18" viewBox="0 0 19 18"><circle cx="8" cy="8" r="7" fill="#f49b9b"/><ellipse cx="8" cy="5.4" rx="5.4" ry="3.6" fill="#fbb" opacity=".6"/><rect x="4.6" y="6.8" width="6.2" height="2.2" rx=".5" fill="#fff"/><path d="M13.4 7.2 V13.6 M10.2 10.4 H16.6 M10.6 15.4 H16.4" stroke="#a09a7a" stroke-width="2.6" opacity=".9"/><path d="M13.4 7.6 V13.2 M10.6 10.4 H16.2 M11 15.4 H16" stroke="#fff0a8" stroke-width="1.3"/></svg>
<svg style="left:583px;top:148px;" width="12" height="16" viewBox="0 0 12 16"><defs><linearGradient id="gpl" x1="0" y1="0" x2="1" y2="1"><stop offset="0" stop-color="#6fe010"/><stop offset=".5" stop-color="#3da81c"/><stop offset="1" stop-color="#2b7a1c"/></linearGradient></defs><path d="M1.6 1.4 L10 8 L1.6 14.6 Z" fill="url(#gpl)" stroke="#2b7f1a" stroke-width="1" stroke-linejoin="round"/></svg>
<svg style="left:608px;top:147px;" width="15" height="17" viewBox="0 0 15 17"><path d="M4.4 7.6 L12.4 11 L4.4 15.8 Z" fill="#3da81c" stroke="#2b7f1a" stroke-width=".8" stroke-linejoin="round"/><path d="M2 4.6 L4 5.6 M1.6 8 L3.8 7.6 M3.4 11 L5 9.4 M9.4 1.6 L10.8 0.8 M11.4 3.4 L12.6 2.4 M11.6 6.6 L13 6.4" stroke="#000" stroke-width="1"/><ellipse cx="7" cy="6.4" rx="4.3" ry="3.9" transform="rotate(-30 7 6.4)" fill="#e01818" stroke="#000" stroke-width="1.1"/><circle cx="10.4" cy="3" r="1.7" fill="#000"/><circle cx="5.4" cy="5.4" r=".8" fill="#fff"/><circle cx="7.8" cy="7.2" r=".8" fill="#fff"/><circle cx="5.4" cy="8.4" r=".7" fill="#fff"/><circle cx="8.2" cy="4.4" r=".7" fill="#fff"/></svg>
<svg style="left:1580px;top:148px;" width="17" height="18" viewBox="0 0 17 18"><defs><radialGradient id="gz1" cx="45%" cy="40%" r="60%"><stop offset="0" stop-color="#fff"/><stop offset="1" stop-color="#bfe3fa"/></radialGradient></defs><path d="M6.6 9.8 L1.4 15" stroke="#e89a4c" stroke-width="2.4" stroke-linecap="round"/><path d="M6.2 9.4 L1.6 14" stroke="#f8cf9a" stroke-width=".8"/><circle cx="10" cy="6" r="4.9" fill="url(#gz1)" stroke="#a8cfee" stroke-width="1.3"/><path d="M10.6 14 H15.4" stroke="#000" stroke-width="1.3"/></svg>
<svg style="left:1608px;top:148px;" width="17" height="18" viewBox="0 0 17 18"><defs><radialGradient id="gz2" cx="45%" cy="40%" r="60%"><stop offset="0" stop-color="#fff"/><stop offset="1" stop-color="#bfe3fa"/></radialGradient></defs><path d="M6.6 9.8 L1.4 15" stroke="#e89a4c" stroke-width="2.4" stroke-linecap="round"/><path d="M6.2 9.4 L1.6 14" stroke="#f8cf9a" stroke-width=".8"/><circle cx="10" cy="6" r="4.9" fill="url(#gz2)" stroke="#a8cfee" stroke-width="1.3"/><path d="M10.6 14 H15.4" stroke="#000" stroke-width="1.3"/><path d="M13 11.6 V16.4" stroke="#000" stroke-width="1.3"/></svg>
<svg style="left:1640px;top:148px;" width="16" height="16" viewBox="0 0 16 16"><rect x="0" y="0" width="16" height="16" fill="#fbfbff"/><rect x="0" y="0" width="1.2" height="16" fill="#c6cae6"/><rect x="0" y="0" width="16" height="1.2" fill="#c6cae6"/><rect x="3" y="0" width="1.2" height="16" fill="#c6cae6"/><rect x="0" y="3" width="16" height="1.2" fill="#c6cae6"/><rect x="6" y="0" width="1.2" height="16" fill="#c6cae6"/><rect x="0" y="6" width="16" height="1.2" fill="#c6cae6"/><rect x="9" y="0" width="1.2" height="16" fill="#c6cae6"/><rect x="0" y="9" width="16" height="1.2" fill="#c6cae6"/><rect x="12" y="0" width="1.2" height="16" fill="#c6cae6"/><rect x="0" y="12" width="16" height="1.2" fill="#c6cae6"/><rect x="15" y="0" width="1.2" height="16" fill="#c6cae6"/><rect x="0" y="15" width="16" height="1.2" fill="#c6cae6"/></svg>
<div style="left:1665px;top:144px;width:23px;height:24px;background:#d3e5fa;border-top:1px solid #6a6a6a;border-left:1px solid #6a6a6a;box-sizing:border-box;"></div>
<svg style="left:1669px;top:149px;" width="16" height="16" viewBox="0 0 16 16"><rect x="0" y="0" width="16" height="16" fill="#fbfbff"/><rect x="0" y="0" width="1.2" height="16" fill="#c6cae6"/><rect x="0" y="0" width="16" height="1.2" fill="#c6cae6"/><rect x="3" y="0" width="1.2" height="16" fill="#c6cae6"/><rect x="0" y="3" width="16" height="1.2" fill="#c6cae6"/><rect x="6" y="0" width="1.2" height="16" fill="#c6cae6"/><rect x="0" y="6" width="16" height="1.2" fill="#c6cae6"/><rect x="9" y="0" width="1.2" height="16" fill="#c6cae6"/><rect x="0" y="9" width="16" height="1.2" fill="#c6cae6"/><rect x="12" y="0" width="1.2" height="16" fill="#c6cae6"/><rect x="0" y="12" width="16" height="1.2" fill="#c6cae6"/><rect x="15" y="0" width="1.2" height="16" fill="#c6cae6"/><rect x="0" y="15" width="16" height="1.2" fill="#c6cae6"/></svg>
<svg style="left:1668px;top:148px;" width="20" height="18" viewBox="0 0 20 18"><path d="M4.6 10.4 L8.6 14.4 L16 5.4" stroke="#1a1f8c" stroke-width="2.1" fill="none"/><path d="M4.6 10.4 L8.6 14.4 L10 12.8" stroke="#000" stroke-width="2.1" fill="none"/></svg>
<svg style="left:1705px;top:147px;" width="17" height="14" viewBox="0 0 17 14"><rect x="1" y="1" width="15" height="11.4" rx="1.4" fill="#fff200" stroke="#e08a2a" stroke-width="1.2"/><path d="M3 4 H14 M3 6.6 H14 M3 9.2 H14" stroke="#7a4a10" stroke-width="1.3" stroke-dasharray="3.4 .8 2.6 .6"/></svg>
<svg style="left:1706.2px;top:178.2px;" width="15.6" height="15.6" viewBox="0 0 15.6 15.6"><defs><radialGradient id="h3" cx="40%" cy="30%" r="75%"><stop offset="0" stop-color="#b4ccfb"/><stop offset=".5" stop-color="#5585ec"/><stop offset="1" stop-color="#3a66d6"/></radialGradient></defs><circle cx="7.8" cy="7.8" r="7.3" fill="url(#h3)" stroke="#9bb9f6" stroke-width=".8"/><ellipse cx="7.8" cy="4.515000000000001" rx="5.109999999999999" ry="3.066" fill="#fff" opacity=".28"/><text x="7.8" y="12.2" text-anchor="middle" font-family="Liberation Sans, sans-serif" font-weight="700" font-size="12.5" fill="#eef3ff">?</text></svg>
<svg style="left:536px;top:174px;" width="834" height="24" viewBox="0 0 834 24"><defs><linearGradient id="gy" x1="0" y1="0" x2="0" y2="1"><stop offset="0" stop-color="#ffe95a"/><stop offset="1" stop-color="#fff8c8"/></linearGradient><linearGradient id="gb" x1="0" y1="0" x2="0" y2="1"><stop offset="0" stop-color="#eef0fa"/><stop offset="1" stop-color="#c3cae6"/></linearGradient></defs><rect x="4" y="3" width="2" height="17" fill="#a8a3c6"/><rect x="7.5" y="4.5" width="8" height="6" fill="url(#gy)" stroke="#e3b98c" stroke-width="1"/><rect x="8.5" y="5.5" width="6" height="4" fill="none" stroke="#fff" stroke-width="1" opacity=".55"/><rect x="7.5" y="12.5" width="10" height="6" fill="url(#gb)" stroke="#a9b2dc" stroke-width="1"/><rect x="8.5" y="13.5" width="8" height="4" fill="none" stroke="#fff" stroke-width="1" opacity=".7"/><rect x="47" y="3" width="2" height="17" fill="#a8a3c6"/><rect x="37.5" y="4.5" width="8" height="6" fill="url(#gy)" stroke="#e3b98c" stroke-width="1"/><rect x="38.5" y="5.5" width="6" height="4" fill="none" stroke="#fff" stroke-width="1" opacity=".55"/><rect x="35.5" y="12.5" width="10" height="6" fill="url(#gb)" stroke="#a9b2dc" stroke-width="1"/><rect x="36.5" y="13.5" width="8" height="4" fill="none" stroke="#fff" stroke-width="1" opacity=".7"/><rect x="61" y="3" width="17" height="2" fill="#a8a3c6"/><rect x="62.5" y="6.5" width="6" height="6" fill="url(#gy)" stroke="#e3b98c" stroke-width="1"/><rect x="63.5" y="7.5" width="4" height="4" fill="none" stroke="#fff" stroke-width="1" opacity=".55"/><rect x="70.5" y="6.5" width="6" height="10" fill="url(#gb)" stroke="#a9b2dc" stroke-width="1"/><rect x="71.5" y="7.5" width="4" height="8" fill="none" stroke="#fff" stroke-width="1" opacity=".7"/><rect x="90" y="18" width="17" height="2" fill="#a8a3c6"/><rect x="91.5" y="10.5" width="6" height="6" fill="url(#gy)" stroke="#e3b98c" stroke-width="1"/><rect x="92.5" y="11.5" width="4" height="4" fill="none" stroke="#fff" stroke-width="1" opacity=".55"/><rect x="99.5" y="6.5" width="6" height="10" fill="url(#gb)" stroke="#a9b2dc" stroke-width="1"/><rect x="100.5" y="7.5" width="4" height="8" fill="none" stroke="#fff" stroke-width="1" opacity=".7"/><rect x="119" y="3" width="2" height="17" fill="#a8a3c6"/><rect x="134" y="3" width="2" height="17" fill="#a8a3c6"/><rect x="122.5" y="4.5" width="10" height="6" fill="url(#gy)" stroke="#e3b98c" stroke-width="1"/><rect x="123.5" y="5.5" width="8" height="4" fill="none" stroke="#fff" stroke-width="1" opacity=".55"/><rect x="122.5" y="12.5" width="10" height="6" fill="url(#gb)" stroke="#a9b2dc" stroke-width="1"/><rect x="123.5" y="13.5" width="8" height="4" fill="none" stroke="#fff" stroke-width="1" opacity=".7"/><rect x="148" y="3" width="17" height="2" fill="#a8a3c6"/><rect x="148" y="18" width="17" height="2" fill="#a8a3c6"/><rect x="149.5" y="6.5" width="6" height="10" fill="url(#gy)" stroke="#e3b98c" stroke-width="1"/><rect x="150.5" y="7.5" width="4" height="8" fill="none" stroke="#fff" stroke-width="1" opacity=".55"/><rect x="157.5" y="6.5" width="6" height="10" fill="url(#gb)" stroke="#a9b2dc" stroke-width="1"/><rect x="158.5" y="7.5" width="4" height="8" fill="none" stroke="#fff" stroke-width="1" opacity=".7"/><rect x="187" y="3" width="2" height="17" fill="#2c2a5e"/><rect x="202" y="3" width="2" height="17" fill="#2c2a5e"/><rect x="190.5" y="4.5" width="11" height="6" fill="#ffe600" stroke="#c07a20" stroke-width="1"/><rect x="190.5" y="12.5" width="11" height="6" fill="#8ecbf6" stroke="#1f63c8" stroke-width="1"/><polygon points="204.5,12.5 201.1,13.6 202.7,16.7 199.6,15.1 198.5,18.5 197.4,15.1 194.3,16.7 195.9,13.6 192.5,12.5 195.9,11.4 194.3,8.3 197.4,9.9 198.5,6.5 199.6,9.9 202.7,8.3 201.1,11.4" fill="#ffd21e" stroke="#f08a10" stroke-width=".7"/><circle cx="198.5" cy="12.5" r="2.2" fill="#fffbe0"/><path d="M226.0 12.0 H232" stroke="#9c9ac8" stroke-width="1.6" fill="none" /><path d="M229.5 9.0 L233.0 12.0 L229.5 15.0 Z" fill="#9c9ac8"/><rect x="233.5" y="8.5" width="7" height="7" fill="url(#gb)" stroke="#a9b2dc" stroke-width="1"/><rect x="234.5" y="9.5" width="5" height="5" fill="none" stroke="#fff" stroke-width="1" opacity=".7"/><path d="M262.0 4.0 V10" stroke="#9c9ac8" stroke-width="2" fill="none" /><path d="M258.5 7.5 L262.0 11.5 L265.5 7.5 Z" fill="#9c9ac8"/><rect x="258.5" y="11.5" width="7" height="6" fill="url(#gb)" stroke="#a9b2dc" stroke-width="1"/><rect x="259.5" y="12.5" width="5" height="4" fill="none" stroke="#fff" stroke-width="1" opacity=".7"/><path d="M283.0 6.0 L288.0 11.0" stroke="#9c9ac8" stroke-width="2" fill="none" /><path d="M290.0 8.0 L290.0 13.0 L285.0 13.0 Z" fill="#9c9ac8"/><rect x="289.5" y="12.5" width="7" height="6" fill="url(#gb)" stroke="#a9b2dc" stroke-width="1"/><rect x="290.5" y="13.5" width="5" height="4" fill="none" stroke="#fff" stroke-width="1" opacity=".7"/><path d="M321.0 6.0 L326.0 11.0" stroke="#8f78d2" stroke-width="2.2" fill="none" /><path d="M328.0 7.5 L328.0 13.0 L322.5 13.0 Z" fill="#8f78d2"/><rect x="327.5" y="12.5" width="6" height="5" fill="#cfe3fb" stroke="#7ab0ea" stroke-width="1"/><rect x="329.5" y="14.5" width="6" height="5" fill="#dcebfc" stroke="#7ab0ea" stroke-width="1"/><path d="M331.0 6.5 H336 M333.5 4.0 V9" stroke="#505050" stroke-width="1" fill="none" /><rect x="351.5" y="9.5" width="9" height="8" fill="#d6e7fb" stroke="#7ab0ea" stroke-width="1"/><path d="M353.0 10.0 V14.5 H358" stroke="#9cc4f0" stroke-width="1.2" fill="none" /><path d="M359.0 6.5 H364 M361.5 4.0 V9" stroke="#505050" stroke-width="1" fill="none" /><rect x="377.5" y="10.5" width="14" height="6" fill="#b4d6f8" stroke="#7ab0ea" stroke-width="1"/><path d="M380.0 13.5 H388" stroke="#555" stroke-width="1" fill="none" /><path d="M386.0 11.2 L389.5 13.5 L386.0 15.8 Z" fill="#555"/><circle cx="420.5" cy="10.5" r="3.6" fill="none" stroke="#c4c4c4" stroke-width="1.6" stroke-dasharray="1.5 1.3"/><circle cx="420.5" cy="10.5" r="2.7" fill="#f6f6f6" stroke="#c0c0c0" stroke-width=".8"/><circle cx="420.5" cy="10.5" r="1.1" fill="none" stroke="#c0c0c0" stroke-width=".7"/><polygon points="427.5,9.9 431.1,13.5 427.5,17.1 423.9,13.5" fill="#8e8e8e" opacity=".85"/><rect x="425.0" y="17.0" width="5" height="1" fill="#8e8e8e" opacity=".8"/><rect x="425.0" y="19.0" width="6" height="1" fill="#8e8e8e" opacity=".8"/><rect x="427.0" y="16.0" width="1" height="2" fill="#8e8e8e" opacity=".7"/><rect x="424.0" y="13.0" width="7" height="1" fill="#fff0a0"/><rect x="427.0" y="10.0" width="1" height="6.5" fill="#fff0a0"/><rect x="424.0" y="18.0" width="7" height="1" fill="#ffeb98"/><circle cx="449" cy="11" r="3.8" fill="none" stroke="#cfcfcf" stroke-width="1.4" stroke-dasharray="1.5 1.3"/><path d="M445.0 7.0 L453.0 15.0 M453.0 7.0 L445.0 15.0" stroke="#e58997" stroke-width="2.2" fill="none" /><polygon points="455.5,9.9 459.1,13.5 455.5,17.1 451.9,13.5" fill="#8e8e8e" opacity=".85"/><rect x="453.0" y="17.0" width="5" height="1" fill="#8e8e8e" opacity=".8"/><rect x="453.0" y="19.0" width="6" height="1" fill="#8e8e8e" opacity=".8"/><rect x="455.0" y="16.0" width="1" height="2" fill="#8e8e8e" opacity=".7"/><rect x="452.0" y="13.0" width="7" height="1" fill="#fff0a0"/><rect x="455.0" y="10.0" width="1" height="6.5" fill="#fff0a0"/><rect x="452.0" y="18.0" width="7" height="1" fill="#ffeb98"/><path d="M476.0 6.0 L482.6 6.0 L479.4 9.6 L482.0 9.6 L474.4 16.0 L477.0 11.4 L473.6 11.4 Z" fill="#ffe87a" stroke="#f0c84a" stroke-width=".7"/><polygon points="483.5,9.9 487.1,13.5 483.5,17.1 479.9,13.5" fill="#8e8e8e" opacity=".85"/><rect x="481.0" y="17.0" width="5" height="1" fill="#8e8e8e" opacity=".8"/><rect x="481.0" y="19.0" width="6" height="1" fill="#8e8e8e" opacity=".8"/><rect x="483.0" y="16.0" width="1" height="2" fill="#8e8e8e" opacity=".7"/><rect x="480.0" y="13.0" width="7" height="1" fill="#fff0a0"/><rect x="483.0" y="10.0" width="1" height="6.5" fill="#fff0a0"/><rect x="480.0" y="18.0" width="7" height="1" fill="#ffeb98"/><path d="M502.5 7.5 H510.5 V13.5 Q510.5 16 508 16 H501.5 Q502.79999999999995 14 502.5 12 Z" fill="#f2f7fe" stroke="#c4daf6" stroke-width="1"/><polygon points="511.5,9.9 515.1,13.5 511.5,17.1 507.9,13.5" fill="#8e8e8e" opacity=".85"/><rect x="509.0" y="17.0" width="5" height="1" fill="#8e8e8e" opacity=".8"/><rect x="509.0" y="19.0" width="6" height="1" fill="#8e8e8e" opacity=".8"/><rect x="511.0" y="16.0" width="1" height="2" fill="#8e8e8e" opacity=".7"/><rect x="508.0" y="13.0" width="7" height="1" fill="#fff0a0"/><rect x="511.0" y="10.0" width="1" height="6.5" fill="#fff0a0"/><rect x="508.0" y="18.0" width="7" height="1" fill="#ffeb98"/><rect x="537.5" y="7.5" width="9" height="4" fill="#dde2f5" stroke="#9c98b8" stroke-width="1"/><rect x="541" y="5" width="2" height="2" fill="#dc607a"/><polygon points="549.5,9.9 553.1,13.5 549.5,17.1 545.9,13.5" fill="#8e8e8e" opacity=".85"/><rect x="547.0" y="17.0" width="5" height="1" fill="#8e8e8e" opacity=".8"/><rect x="547.0" y="19.0" width="6" height="1" fill="#8e8e8e" opacity=".8"/><rect x="549.0" y="16.0" width="1" height="2" fill="#8e8e8e" opacity=".7"/><rect x="546.0" y="13.0" width="7" height="1" fill="#fff0a0"/><rect x="549.0" y="10.0" width="1" height="6.5" fill="#fff0a0"/><rect x="546.0" y="18.0" width="7" height="1" fill="#ffeb98"/><rect x="565.5" y="7.5" width="9" height="4" fill="#dde2f5" stroke="#9c98b8" stroke-width="1"/><rect x="569" y="12" width="2" height="2" fill="#dc607a"/><polygon points="577.5,9.9 581.1,13.5 577.5,17.1 573.9,13.5" fill="#8e8e8e" opacity=".85"/><rect x="575.0" y="17.0" width="5" height="1" fill="#8e8e8e" opacity=".8"/><rect x="575.0" y="19.0" width="6" height="1" fill="#8e8e8e" opacity=".8"/><rect x="577.0" y="16.0" width="1" height="2" fill="#8e8e8e" opacity=".7"/><rect x="574.0" y="13.0" width="7" height="1" fill="#fff0a0"/><rect x="577.0" y="10.0" width="1" height="6.5" fill="#fff0a0"/><rect x="574.0" y="18.0" width="7" height="1" fill="#ffeb98"/><rect x="597.5" y="6.5" width="6" height="3" fill="#bcd2da" stroke="#86adb8" stroke-width="1"/><rect x="597.5" y="14.5" width="6" height="3" fill="#bcd2da" stroke="#86adb8" stroke-width="1"/><path d="M600.5 10.0 V14.5" stroke="#ff5a5a" stroke-width="1" fill="none" /><rect x="625.5" y="6.5" width="6" height="3" fill="#bcd2da" stroke="#86adb8" stroke-width="1"/><rect x="625.5" y="14.5" width="6" height="3" fill="#bcd2da" stroke="#86adb8" stroke-width="1"/><path d="M628.5 10.0 V14.5" stroke="#ff5a5a" stroke-width="1" fill="none" /><path d="M634.5 8.5 Q637.5 12 634.5 15.5" stroke="#555" stroke-width="1" fill="none" /><path d="M633.0 9.5 L634.5 7.0 L636.0 9.5 Z M633.0 14.5 L634.5 17.0 L636.0 14.5 Z" fill="#555"/><rect x="660.5" y="9.5" width="3" height="6" fill="#dedeee" stroke="#a9a8c6" stroke-width="1"/><rect x="670.5" y="9.5" width="3" height="6" fill="#dedeee" stroke="#a9a8c6" stroke-width="1"/><path d="M664.0 12.5 H670" stroke="#777" stroke-width="1" fill="none" /><path d="M665.4 10.8 L668.6 14.2 M668.6 10.8 L665.4 14.2" stroke="#e06070" stroke-width="1" fill="none" /><rect x="687.5" y="6.5" width="3" height="6" fill="#dedeee" stroke="#a9a8c6" stroke-width="1"/><rect x="699.5" y="10.5" width="3" height="6" fill="#dedeee" stroke="#a9a8c6" stroke-width="1"/><path d="M691.0 9.5 H694.5 V13.5 H699" stroke="#777" stroke-width="1" fill="none" /><text x="695" y="11.599999999999994" font-family="Liberation Sans, sans-serif" font-size="7.5" font-weight="700" fill="#e05a6a">?</text><rect x="725.5" y="5.5" width="3" height="6" fill="#dedeee" stroke="#a9a8c6" stroke-width="1"/><rect x="737.5" y="12.5" width="3" height="6" fill="#dedeee" stroke="#a9a8c6" stroke-width="1"/><path d="M729.0 7.0 L737.0 15.0" stroke="#777" stroke-width="1" fill="none" /><rect x="753.5" y="6.5" width="3" height="6" fill="#dedeee" stroke="#a9a8c6" stroke-width="1"/><rect x="765.5" y="10.5" width="3" height="6" fill="#dedeee" stroke="#a9a8c6" stroke-width="1"/><path d="M757.0 8.5 L762.0 13.5 H765" stroke="#777" stroke-width="1" fill="none" /><rect x="781.5" y="6.5" width="3" height="6" fill="#dedeee" stroke="#a9a8c6" stroke-width="1"/><rect x="793.5" y="10.5" width="3" height="6" fill="#dedeee" stroke="#a9a8c6" stroke-width="1"/><path d="M785.0 9.5 H788.5 L790.0 13.5 H793" stroke="#777" stroke-width="1" fill="none" /><rect x="809.5" y="6.5" width="3" height="6" fill="#dedeee" stroke="#a9a8c6" stroke-width="1"/><rect x="821.5" y="10.5" width="3" height="6" fill="#dedeee" stroke="#a9a8c6" stroke-width="1"/><path d="M813.0 9.5 H816.5 V13.5 H821" stroke="#777" stroke-width="1" fill="none" /></svg>
</body></html>
